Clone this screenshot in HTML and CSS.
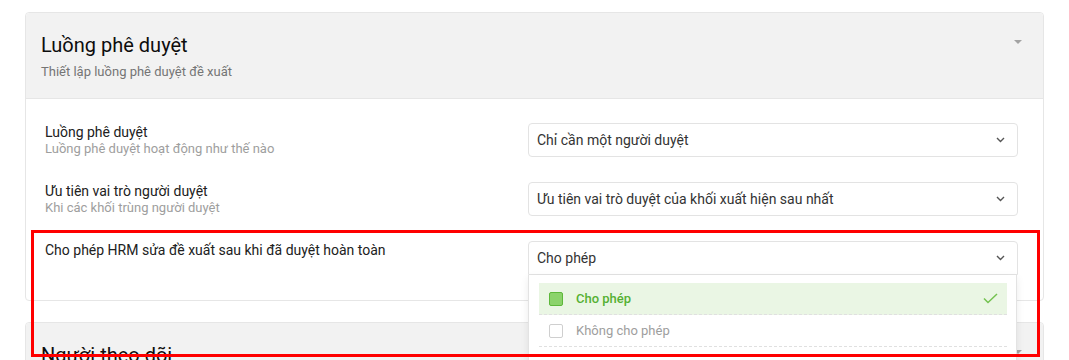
FILE: index.html
```html
<!DOCTYPE html>
<html>

<head>
    <meta charset="UTF-8">
    <title>Luồng phê duyệt</title>
    <link rel="stylesheet" href="styles.css">
</head>

<body>
    <div class="page">
        <!-- Khối cấu hình luồng phê duyệt -->
        <section class="card">
            <header class="card-head">
                <div>
                    <h2>Luồng phê duyệt</h2>
                    <p>Thiết lập luồng phê duyệt đề xuất</p>
                </div>
                <span class="caret"></span>
            </header>
            <div class="card-body">
                <div class="setting-row">
                    <div class="setting-label">
                        <div class="name">Luồng phê duyệt</div>
                        <div class="hint">Luồng phê duyệt hoạt động như thế nào</div>
                    </div>
                    <div class="select-wrap">
                        <div class="select">
                            <span>Chỉ cần một người duyệt</span>
                            <svg class="chevron" width="9" height="6" viewBox="0 0 9 6"><polyline points="1,1 4.5,4.5 8,1" /></svg>
                        </div>
                    </div>
                </div>
                <div class="setting-row">
                    <div class="setting-label">
                        <div class="name">Ưu tiên vai trò người duyệt</div>
                        <div class="hint">Khi các khối trùng người duyệt</div>
                    </div>
                    <div class="select-wrap">
                        <div class="select">
                            <span>Ưu tiên vai trò duyệt của khối xuất hiện sau nhất</span>
                            <svg class="chevron" width="9" height="6" viewBox="0 0 9 6"><polyline points="1,1 4.5,4.5 8,1" /></svg>
                        </div>
                    </div>
                </div>
                <div class="setting-row">
                    <div class="setting-label">
                        <div class="name">Cho phép HRM sửa đề xuất sau khi đã duyệt hoàn toàn</div>
                    </div>
                    <div class="select-wrap">
                        <div class="select open">
                            <span>Cho phép</span>
                            <svg class="chevron" width="9" height="6" viewBox="0 0 9 6"><polyline points="1,1 4.5,4.5 8,1" /></svg>
                        </div>
                        <ul class="dropdown">
                            <li class="option selected">
                                <span class="box"></span>
                                <span class="text">Cho phép</span>
                                <svg class="tick" width="15" height="11" viewBox="0 0 15 11"><polyline points="1,5.5 5,9.5 14,1" /></svg>
                            </li>
                            <li class="option">
                                <span class="box"></span>
                                <span class="text">Không cho phép</span>
                            </li>
                        </ul>
                    </div>
                </div>
            </div>
        </section>

        <section class="card">
            <header class="card-head">
                <div>
                    <h2>Người theo dõi</h2>
                    <p>Thiết lập người theo dõi đề xuất</p>
                </div>
                <span class="caret"></span>
            </header>
        </section>
    </div>

    <!-- khung đánh dấu -->
    <div class="mark"></div>
</body>

</html>
```

FILE: styles.css
```css
body {
    margin: 0;
    font-family: Roboto, "Liberation Sans", sans-serif;
    background-color: #ffffff;
    color: #212121;
}

.page {
    padding: 12px 25px 0 25px;
}

.card {
    border: 1px solid #e6e6e6;
    border-radius: 4px;
    background-color: #ffffff;
    margin-bottom: 21px;
}

.card-head {
    display: flex;
    justify-content: space-between;
    align-items: flex-start;
    padding: 20px 21px 18px 15px;
    background-color: #f2f2f2;
    border-bottom: 1px solid #e6e6e6;
    border-radius: 4px 4px 0 0;
}

.card-head h2 {
    margin: 0;
    font-size: 20px;
    line-height: 24px;
    font-weight: 400;
    color: #0d0d0d;
}

.card-head p {
    margin: 6px 0 0 0;
    font-size: 13px;
    line-height: 17px;
    color: #757575;
}

.caret {
    margin-top: 7px;
    width: 0;
    height: 0;
    border-left: 4px solid transparent;
    border-right: 4px solid transparent;
    border-top: 4px solid #a3a3a3;
}

.card-body {
    padding: 24px 25px 25px 19px;
    display: flex;
    flex-direction: column;
    gap: 25px;
}

.setting-row {
    display: flex;
    align-items: flex-start;
}

.setting-label {
    flex: 1;
    padding-top: 1px;
}

.setting-label .name {
    font-size: 14px;
    line-height: 16px;
    color: #212121;
}

.setting-label .hint {
    font-size: 13px;
    line-height: 16px;
    color: #9e9e9e;
    margin-top: 1px;
}

.select-wrap {
    position: relative;
    width: 490px;
}

.select {
    height: 34px;
    box-sizing: border-box;
    border: 1px solid #e3e3e3;
    border-radius: 4px;
    display: flex;
    align-items: center;
    justify-content: space-between;
    padding: 0 12px 0 8px;
    font-size: 14px;
    color: #333333;
    background-color: #ffffff;
}

.select.open {
    border-radius: 4px 4px 0 0;
}

.chevron polyline {
    fill: none;
    stroke: #555555;
    stroke-width: 1.4;
}

.dropdown {
    position: absolute;
    top: 100%;
    left: 0;
    right: 1px;
    z-index: 10;
    list-style: none;
    margin: 0;
    padding: 8px 9px 20px 10px;
    background-color: #ffffff;
    border: 1px solid #e3e3e3;
    border-top: none;
    box-shadow: 0 3px 8px rgba(0, 0, 0, 0.08);
}

.option {
    display: flex;
    align-items: center;
    height: 31px;
    padding: 0 9px 0 10px;
    border-bottom: 1px dashed #e0e0e0;
    font-size: 13px;
    color: #9e9e9e;
}

.option .box {
    width: 14px;
    height: 14px;
    box-sizing: border-box;
    border: 1px solid #cfcfcf;
    border-radius: 2px;
    margin-right: 13px;
    background-color: #ffffff;
}

.option .text {
    flex: 1;
}

.option.selected {
    background-color: #eaf6e4;
    color: #55b133;
    font-weight: 500;
}

.option.selected .box {
    background-color: #8bd36b;
    border-color: #5db83a;
}

.tick polyline {
    fill: none;
    stroke: #74c250;
    stroke-width: 1.5;
}

.mark {
    position: absolute;
    left: 31px;
    top: 230px;
    width: 1003px;
    height: 121px;
    border: 3px solid #ff0000;
    z-index: 20;
}
```
